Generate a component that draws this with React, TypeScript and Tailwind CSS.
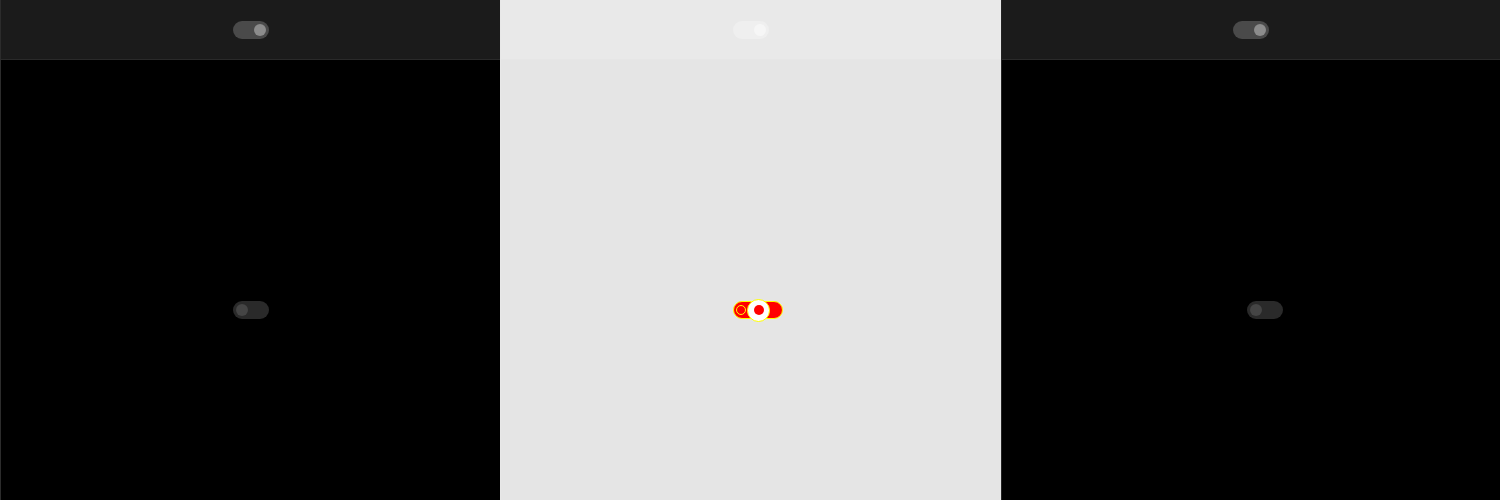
import React from "react";

function Toggle({ on, track, knob }: { on: boolean; track: string; knob: string }) {
  return (
    <div
      className={`w-[36px] h-[18px] rounded-full flex items-center px-[3px] ${on ? "justify-end" : "justify-start"}`}
      style={{ backgroundColor: track }}
    >
      <div className="w-[12px] h-[12px] rounded-full" style={{ backgroundColor: knob }} />
    </div>
  );
}

function DebugToggle() {
  return (
    <div className="w-[50px] h-[18px] rounded-full bg-[#ff0000] border border-[#ffff00] flex items-center">
      <div className="ml-[2px] w-[10px] h-[10px] shrink-0 rounded-full bg-[#ff0000] border border-[#ffff00]" />
      <div className="ml-[1px] w-[23px] h-[23px] shrink-0 rounded-full bg-white border border-[#ffff00] flex items-center justify-center">
        <div className="w-[10px] h-[10px] rounded-full bg-[#ff0000]" />
      </div>
    </div>
  );
}

export default function App() {
  return (
    <div className="flex w-[1500px] h-[500px] overflow-hidden" style={{ fontFamily: "Inter, 'Liberation Sans', sans-serif" }}>
      {/* Left panel */}
      <div className="w-[500px] shrink-0 border-l border-[#2c2c2c] flex flex-col">
        <div className="h-[60px] shrink-0 bg-[#1b1b1b] border-b border-[#2a2a2a] flex items-center justify-center pl-[1px]">
          <Toggle on track="#4a4a4a" knob="#8c8c8c" />
        </div>
        <div className="h-[500px] shrink-0 bg-black flex items-center justify-center pl-[1px]">
          <Toggle on={false} track="#2a2a2a" knob="#454545" />
        </div>
      </div>
      {/* Middle panel */}
      <div className="w-[501px] shrink-0 border-l border-[#e8e8e8] flex flex-col">
        <div className="h-[60px] shrink-0 bg-[#e9e9e9] border-b border-[#e6e6e6] flex items-center justify-center">
          <Toggle on track="#efefef" knob="#f6f6f6" />
        </div>
        <div className="h-[500px] shrink-0 bg-[#e5e5e5] flex items-center justify-center pl-[14px]">
          <DebugToggle />
        </div>
      </div>
      {/* Right panel */}
      <div className="w-[499px] shrink-0 border-l border-[#242424] flex flex-col">
        <div className="h-[60px] shrink-0 bg-[#1b1b1b] border-b border-[#2a2a2a] flex items-center justify-center">
          <Toggle on track="#4a4a4a" knob="#8c8c8c" />
        </div>
        <div className="h-[500px] shrink-0 bg-black flex items-center justify-center pl-[28px]">
          <Toggle on={false} track="#2a2a2a" knob="#454545" />
        </div>
      </div>
    </div>
  );
}
